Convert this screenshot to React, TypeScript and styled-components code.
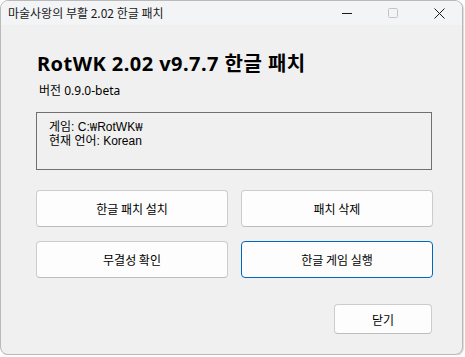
import React from 'react';
import styled, { createGlobalStyle } from 'styled-components';

const GlobalStyle = createGlobalStyle`
  html, body {
    margin: 0;
    padding: 0;
    background: #ffffff;
  }
  body {
    font-family: "Segoe UI", "Noto Sans", "Noto Sans CJK KR", sans-serif;
  }
`;

const Window = styled.div`
  width: 463px;
  height: 355px;
  box-sizing: border-box;
  border: 1px solid #b9b9b9;
  border-radius: 8px;
  overflow: hidden;
  background: #f0f0f0;
  display: flex;
  flex-direction: column;
  box-shadow: 1px 1px 1px rgba(0, 0, 0, 0.15);
`;

const TitleBar = styled.div`
  height: 24px;
  flex: none;
  display: flex;
  align-items: center;
  background: #f3f4f6;
  padding-left: 7px;
`;

const TitleText = styled.div`
  flex: 1;
  font-size: 12px;
  color: #1a1a1a;
  font-family: "Noto Sans CJK KR", sans-serif;
  margin-top: -2px;
`;

const CaptionButton = styled.div`
  width: 46px;
  height: 24px;
  display: flex;
  align-items: center;
  justify-content: center;
  color: #1a1a1a;
`;

const Body = styled.div`
  flex: 1;
  display: flex;
  flex-direction: column;
  padding: 25px 30px 0 35px;
`;

const Heading = styled.h1`
  margin: 0 0 0 1px;
  font-size: 20px;
  line-height: 27px;
  font-weight: 700;
  color: #000;
  font-family: "Noto Sans", "Noto Sans CJK KR", sans-serif;
  letter-spacing: 0.45px;
`;

const Version = styled.div`
  margin: 6px 0 0 3px;
  font-size: 12px;
  line-height: 16px;
  color: #000;
  font-family: "Noto Sans", "Noto Sans CJK KR", sans-serif;
`;

const InfoBox = styled.div`
  margin-top: 13px;
  height: 58px;
  box-sizing: border-box;
  border: 1px solid #707070;
  padding: 7px 12px;
  font-size: 12px;
  line-height: 14px;
  color: #000;
  font-family: "Liberation Sans", "Noto Sans CJK KR", sans-serif;
`;

const Won = styled.span`
  font-family: "Noto Sans", sans-serif;
  font-size: 11px;
`;

const ButtonGrid = styled.div`
  margin-top: 20px;
  display: grid;
  grid-template-columns: 192px 192px;
  column-gap: 13px;
  row-gap: 14px;
`;

const ActionButton = styled.button<{ $accent?: boolean }>`
  height: 37px;
  box-sizing: border-box;
  background: #fdfdfd;
  border: 1px solid ${(p) => (p.$accent ? '#0067c0' : '#cccccc')};
  border-bottom-color: ${(p) => (p.$accent ? '#0067c0' : '#bdbdbd')};
  border-radius: 4px;
  font-size: 12px;
  color: #000;
  font-family: "Noto Sans CJK KR", sans-serif;
  padding: 0;
`;

const Footer = styled.div`
  margin-top: 26px;
  display: flex;
  justify-content: flex-end;
`;

const CloseButton = styled(ActionButton)`
  width: 98px;
  height: 30px;
`;

export default function App() {
  return (
    <>
      <GlobalStyle />
      <Window>
        <TitleBar>
          <TitleText>마술사왕의 부활 2.02 한글 패치</TitleText>
          <CaptionButton>
            <svg width="10" height="10" viewBox="0 0 10 10">
              <path d="M0 5.5h10" stroke="#1a1a1a" strokeWidth="1" />
            </svg>
          </CaptionButton>
          <CaptionButton>
            <svg width="10" height="10" viewBox="0 0 10 10">
              <rect x="0.5" y="0.5" width="9" height="9" fill="none" stroke="#c4c4c4" strokeWidth="1" rx="1" />
            </svg>
          </CaptionButton>
          <CaptionButton>
            <svg width="11" height="11" viewBox="0 0 11 11">
              <path d="M0.5 0.5l10 10M10.5 0.5l-10 10" stroke="#1a1a1a" strokeWidth="1" />
            </svg>
          </CaptionButton>
        </TitleBar>
        <Body>
          <Heading>RotWK 2.02 v9.7.7 한글 패치</Heading>
          <Version>버전 0.9.0-beta</Version>
          <InfoBox>
            <div>게임: C:<Won>₩</Won>RotWK<Won>₩</Won></div>
            <div>현재 언어: Korean</div>
          </InfoBox>
          <ButtonGrid>
            <ActionButton>한글 패치 설치</ActionButton>
            <ActionButton>패치 삭제</ActionButton>
            <ActionButton>무결성 확인</ActionButton>
            <ActionButton $accent>한글 게임 실행</ActionButton>
          </ButtonGrid>
          <Footer>
            <CloseButton>닫기</CloseButton>
          </Footer>
        </Body>
      </Window>
    </>
  );
}
